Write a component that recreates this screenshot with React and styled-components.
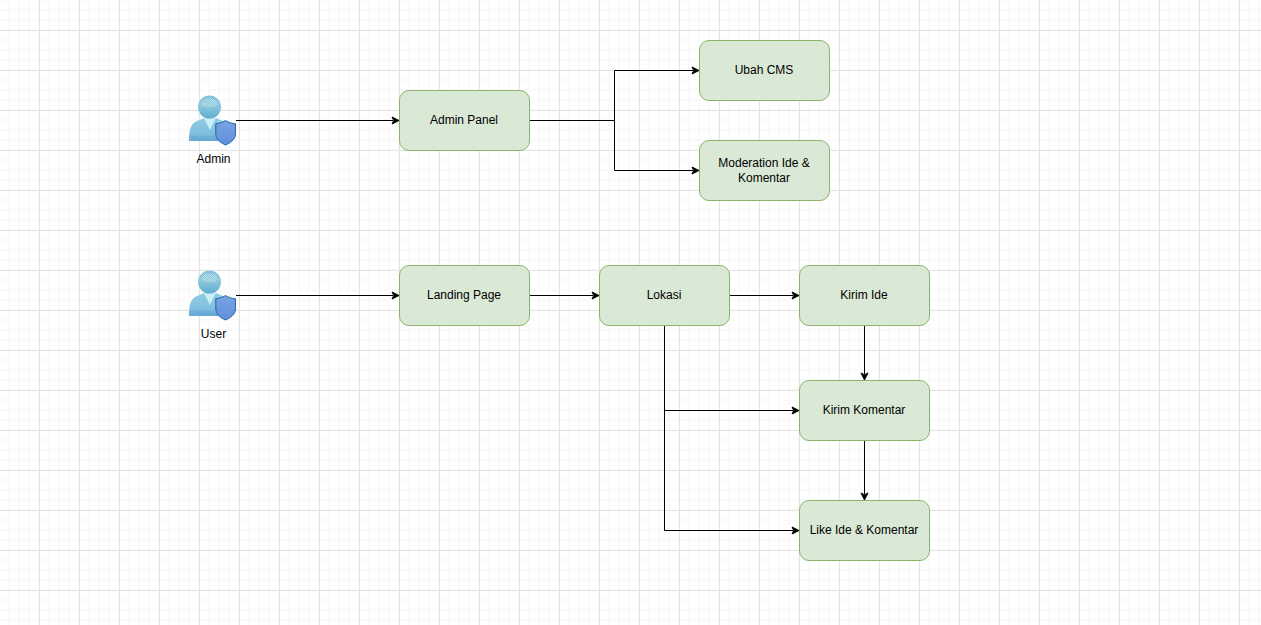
import React from "react";
import styled, { createGlobalStyle } from "styled-components";

const Global = createGlobalStyle`
  html, body { margin: 0; padding: 0; background: #fff; overflow: hidden; }
`;

const Canvas = styled.div`
  position: relative;
  width: 1261px;
  height: 625px;
  overflow: hidden;
  background-color: #fff;
  background-image:
    linear-gradient(90deg, #e4e4e4 1px, transparent 1px),
    linear-gradient(180deg, #e4e4e4 1px, transparent 1px),
    linear-gradient(90deg, #fafafa 2px, transparent 2px),
    linear-gradient(180deg, #fafafa 2px, transparent 2px);
  background-size: 40px 40px, 40px 40px, 10px 10px, 10px 10px;
  background-position: 39px 0, 0 30px, 8px 0, 0 9px;
  font-family: "Liberation Sans", Arial, sans-serif;
`;

const Edges = styled.svg`
  position: absolute;
  inset: 0;
  width: 1261px;
  height: 625px;
`;

const Node = styled.div`
  position: absolute;
  left: ${(p) => p.$x}px;
  top: ${(p) => p.$y}px;
  width: 131px;
  height: 61px;
  box-sizing: border-box;
  padding: 0 5px 0 4px;
  display: flex;
  align-items: center;
  justify-content: center;
  text-align: center;
  font-size: 12px;
  line-height: 15px;
  color: #000;
  background: #dae8d6;
  border: 1px solid #8cb56a;
  border-radius: 10px;
`;

const Actor = styled.div`
  position: absolute;
  left: ${(p) => p.$x}px;
  top: ${(p) => p.$y}px;
  width: 50px;
  height: 72px;
  display: flex;
  flex-direction: column;
  align-items: center;
`;

const ActorLabel = styled.span`
  width: 80px;
  margin-top: 5px;
  padding-left: 1px;
  flex: none;
  text-align: center;
  font-size: 12px;
  line-height: 15px;
  color: #000;
`;

const ActorIcon = ({ id }) => (
  <svg width="50" height="52" viewBox="188 95 50 52" style={{ flex: "none" }}>
    <defs>
      <linearGradient id={`h${id}`} x1="0" y1="0" x2="0" y2="1">
        <stop offset="0" stopColor="#84c3dc" />
        <stop offset="0.4" stopColor="#8fcade" />
        <stop offset="1" stopColor="#5fadd0" />
      </linearGradient>
      <linearGradient id={`b${id}`} x1="0" y1="0" x2="0" y2="1">
        <stop offset="0" stopColor="#8fcbe3" />
        <stop offset="0.6" stopColor="#83c2e0" />
        <stop offset="1" stopColor="#68abd6" />
      </linearGradient>
      <linearGradient id={`s${id}`} x1="0" y1="0" x2="0" y2="1">
        <stop offset="0" stopColor="#7aa3e4" />
        <stop offset="1" stopColor="#5f8fdc" />
      </linearGradient>
      <pattern id={`d${id}`} width="2" height="2" patternUnits="userSpaceOnUse">
        <rect width="1" height="1" fill="#c6e6ee" />
        <rect x="1" y="1" width="1" height="1" fill="#c6e6ee" />
      </pattern>
      <pattern id={`e${id}`} width="2" height="2" patternUnits="userSpaceOnUse">
        <rect width="1" height="1" fill="#5f9fd0" />
        <rect x="1" y="1" width="1" height="1" fill="#5f9fd0" />
      </pattern>
    </defs>
    <path
      d="M189 141 C189 132 190 125 195 122 L204 118 L216 118 L225 122 L232 141 Z"
      fill={`url(#b${id})`}
    />
    <path d="M189.500 136 H232 V141 H189 Z" fill={`url(#e${id})`} opacity="0.6" />
    <path d="M203.500 117.500 L216 117.500 L210 130 Z" fill="#cdeef5" />
    <circle cx="209.500" cy="107" r="11.500" fill={`url(#h${id})`} />
    <ellipse cx="209.500" cy="103" rx="8" ry="4.500" fill={`url(#d${id})`} opacity="0.75" />
    <path
      d="M225.500 120.500 C222.500 122.500 219 123.500 215.800 123.800 L215.800 134 C215.800 139 220 142.500 225.500 145 C231 142.500 235.500 139 235.500 134 L235.500 123.800 C232 123.500 228.500 122.500 225.500 120.500 Z"
      fill={`url(#s${id})`}
      stroke="#1f6aa0"
      strokeWidth="1"
    />
  </svg>
);

const Arrow = ({ x, y, dir }) => {
  const points =
    dir === "right"
      ? `${x},${y} ${x - 7},${y - 3.5} ${x - 5.25},${y} ${x - 7},${y + 3.5}`
      : `${x},${y} ${x - 3.5},${y - 7} ${x},${y - 5.25} ${x + 3.5},${y - 7}`;
  return <polygon points={points} fill="#000" stroke="#000" strokeWidth="1" />;
};

const edgePaths = [
  { d: "M236 120.500 H393", tip: [399, 120.5, "right"] },
  { d: "M530 120.500 H614.500 V70.500 H693", tip: [699, 70.5, "right"] },
  { d: "M614.500 120.500 V170.500 H693", tip: [699, 170.5, "right"] },
  { d: "M236 295.500 H393", tip: [399, 295.5, "right"] },
  { d: "M530 295.500 H593", tip: [599, 295.5, "right"] },
  { d: "M730 295.500 H793", tip: [799, 295.5, "right"] },
  { d: "M864.500 326 V374", tip: [864.5, 380, "down"] },
  { d: "M864.500 441 V494", tip: [864.5, 500, "down"] },
  { d: "M664.500 326 V530.500 H793", tip: [799, 530.5, "right"] },
  { d: "M664.500 410.500 H793", tip: [799, 410.5, "right"] },
];

const nodes = [
  { x: 399, y: 90, text: "Admin Panel" },
  { x: 699, y: 40, text: "Ubah CMS" },
  { x: 699, y: 140, text: <>Moderation Ide &amp;<br />Komentar</> },
  { x: 399, y: 265, text: "Landing Page" },
  { x: 599, y: 265, text: "Lokasi" },
  { x: 799, y: 265, text: "Kirim Ide" },
  { x: 799, y: 380, text: "Kirim Komentar" },
  { x: 799, y: 500, text: "Like Ide & Komentar" },
];

const actors = [
  { x: 188, y: 95, label: "Admin" },
  { x: 188, y: 270, label: "User" },
];

export default function App() {
  return (
    <Canvas>
      <Global />
      <Edges viewBox="0 0 1261 625">
        {edgePaths.map((e) => (
          <g key={e.d}>
            <path d={e.d} fill="none" stroke="#000" strokeWidth="1" />
            <Arrow x={e.tip[0]} y={e.tip[1]} dir={e.tip[2]} />
          </g>
        ))}
      </Edges>
      {actors.map((a) => (
        <Actor key={a.label} $x={a.x} $y={a.y}>
          <ActorIcon id={a.label} />
          <ActorLabel>{a.label}</ActorLabel>
        </Actor>
      ))}
      {nodes.map((n) => (
        <Node key={n.x + "-" + n.y} $x={n.x} $y={n.y}>
          {n.text}
        </Node>
      ))}
    </Canvas>
  );
}
